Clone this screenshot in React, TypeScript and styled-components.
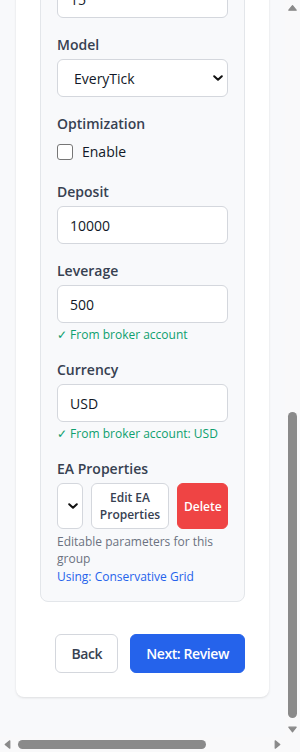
import React, { useLayoutEffect, useRef } from "react";
import styled, { createGlobalStyle } from "styled-components";

const Global = createGlobalStyle`
  html, body { margin: 0; padding: 0; height: 100%; overflow: hidden; }
  body {
    font-family: "Segoe UI", "Open Sans", "Noto Sans", sans-serif;
    background: #f8f9fb;
    color: #111827;
  }
  * { box-sizing: border-box; }
`;

/* ---------- window frame with classic scrollbars ---------- */

const Frame = styled.div`
  display: grid;
  grid-template-columns: 1fr 15px;
  grid-template-rows: 1fr 15px;
  width: 100vw;
  height: 100vh;
  background: #f8f9fb;
`;

const Viewport = styled.div`
  min-width: 0;
  min-height: 0;
  overflow: hidden;
  background: #f8f9fb;
`;

const ScrollBar = styled.div<{ $vertical?: boolean }>`
  display: flex;
  flex-direction: ${(p) => (p.$vertical ? "column" : "row")};
  background: #f9f9fa;
`;

const ScrollArrow = styled.div`
  flex: none;
  width: 15px;
  height: 15px;
  display: flex;
  align-items: center;
  justify-content: center;
`;

const ScrollTrack = styled.div<{ $vertical?: boolean }>`
  flex: 1;
  display: flex;
  flex-direction: ${(p) => (p.$vertical ? "column" : "row")};
  justify-content: ${(p) => (p.$vertical ? "flex-end" : "flex-start")};
  align-items: stretch;
  padding: ${(p) => (p.$vertical ? "0 3px 4px" : "3px 0 3px 3px")};
`;

const ScrollThumb = styled.div<{ $size: number; $vertical?: boolean }>`
  flex: none;
  ${(p) => (p.$vertical ? `height: ${p.$size}px;` : `width: ${p.$size}px;`)}
  background: #8a8a8a;
  border-radius: 5px;
`;

const Corner = styled.div`
  background: #f9f9fa;
`;

const Arrow = ({ dir }: { dir: "up" | "down" | "left" | "right" }) => {
  const pts = {
    up: "3.8,10.2 7.5,5.6 11.2,10.2",
    down: "3.8,5.2 7.5,9.8 11.2,5.2",
    left: "9.8,3.8 5.2,7.5 9.8,11.2",
    right: "5.2,3.8 9.8,7.5 5.2,11.2",
  }[dir];
  return (
    <svg width="15" height="15" viewBox="0 0 15 15">
      <polygon points={pts} fill="#8a8a8a" stroke="#8a8a8a" strokeWidth="1.2" strokeLinejoin="round" />
    </svg>
  );
};

/* ---------- page ---------- */

const Page = styled.div`
  padding: 16px 16px 40px;
`;

const TopBar = styled.header`
  display: flex;
  align-items: center;
  gap: 20px;
  height: 48px;
  margin-bottom: 24px;
  white-space: nowrap;
  font-size: 15px;
  font-weight: 700;
  color: #111827;
`;

const TopLink = styled.span`
  font-size: 13px;
  font-weight: 500;
  color: #6b7280;
`;

const Card = styled.section`
  background: #ffffff;
  border-radius: 8px;
  box-shadow: 0 1px 3px rgba(0, 0, 0, 0.08), 0 1px 2px rgba(0, 0, 0, 0.04);
  padding: 24px;
`;

const Title = styled.h2`
  margin: 0 0 4px;
  font-size: 20px;
  line-height: 28px;
  font-weight: 700;
  color: #111827;
`;

const Subtitle = styled.p`
  margin: 0 0 24px;
  font-size: 14px;
  line-height: 20px;
  color: #6b7280;
`;

const Panel = styled.div`
  background: #f8f9fb;
  border: 1px solid #e3e6ea;
  border-radius: 8px;
  padding: 16px;
`;

const PanelTitle = styled.h3`
  margin: 0 0 16px;
  font-size: 16px;
  line-height: 24px;
  font-weight: 600;
  color: #111827;
`;

const Field = styled.div<{ $last?: boolean }>`
  display: flex;
  flex-direction: column;
  margin-bottom: ${(p) => (p.$last ? "0" : "16px")};
`;

const Label = styled.label`
  display: block;
  font-size: 14px;
  line-height: 21px;
  font-weight: 600;
  color: #374151;
  margin-bottom: 4px;
`;

const TextInput = styled.input`
  display: block;
  width: 100%;
  height: 38px;
  padding: 0 12px;
  border: 1px solid #d4d7dd;
  border-radius: 6px;
  background: #ffffff;
  font-family: inherit;
  font-size: 14px;
  color: #111827;
  outline: none;
`;

const SelectWrap = styled.div<{ $grow?: boolean }>`
  position: relative;
  display: flex;
  ${(p) => (p.$grow ? "flex: 1 1 0; min-width: 0;" : "")}
`;

const Select = styled.select<{ $compact?: boolean }>`
  appearance: none;
  -webkit-appearance: none;
  width: 100%;
  height: ${(p) => (p.$compact ? "auto" : "38px")};
  padding: 0 ${(p) => (p.$compact ? "0" : "24px")} 0 ${(p) => (p.$compact ? "0" : "16px")};
  border: 1px solid #d4d7dd;
  border-radius: 6px;
  background: #ffffff;
  font-family: inherit;
  font-size: 14px;
  color: ${(p) => (p.$compact ? "transparent" : "#111827")};
  outline: none;
`;

const Chevron = styled.svg`
  position: absolute;
  right: 5px;
  top: 50%;
  width: 10px;
  height: 6px;
  margin-top: -3px;
  pointer-events: none;
`;

const CheckRow = styled.label`
  display: flex;
  align-items: center;
  gap: 9px;
  height: 27px;
  font-size: 14px;
  color: #111827;
`;

const Checkbox = styled.input`
  appearance: none;
  -webkit-appearance: none;
  width: 16px;
  height: 16px;
  margin: 0;
  border: 1px solid #767676;
  border-radius: 3px;
  background: #ffffff;
`;

const Hint = styled.div<{ $tone?: "ok" | "muted" | "link"; $gap?: number }>`
  margin-top: ${(p) => p.$gap ?? 4}px;
  font-size: 12px;
  line-height: ${(p) => (p.$tone === "muted" ? "17px" : "16px")};
  color: ${(p) =>
    p.$tone === "ok" ? "#0e9f6e" : p.$tone === "link" ? "#2563eb" : "#6b7280"};
`;

const PropsRow = styled.div`
  display: flex;
  align-items: stretch;
  gap: 8px;
  height: 46px;
`;

const SmallButton = styled.button<{ $danger?: boolean }>`
  flex: none;
  width: ${(p) => (p.$danger ? "51px" : "78px")};
  padding: 5px 6px;
  border: 1px solid ${(p) => (p.$danger ? "#ef4444" : "#d4d7dd")};
  border-radius: 6px;
  background: ${(p) => (p.$danger ? "#ef4444" : "#ffffff")};
  color: ${(p) => (p.$danger ? "#ffffff" : "#374151")};
  font-family: inherit;
  font-size: 12px;
  line-height: 17px;
  font-weight: 600;
  text-align: center;
`;

const Actions = styled.div`
  display: flex;
  justify-content: flex-end;
  gap: 12px;
  margin-top: 32px;
`;

const ActionButton = styled.button<{ $primary?: boolean }>`
  height: 39px;
  padding: 0 15px;
  border: 1px solid ${(p) => (p.$primary ? "#2563eb" : "#d4d7dd")};
  border-radius: 6px;
  background: ${(p) => (p.$primary ? "#2563eb" : "#ffffff")};
  color: ${(p) => (p.$primary ? "#ffffff" : "#374151")};
  font-family: inherit;
  font-size: 14px;
  font-weight: 600;
  letter-spacing: -0.4px;
`;

const ChevronIcon = () => (
  <Chevron viewBox="0 0 10 6">
    <path d="M1.2 1.2 L5 4.8 L8.8 1.2" fill="none" stroke="#111" strokeWidth="2" strokeLinecap="round" strokeLinejoin="round" />
  </Chevron>
);

const upperFields: { label: string; value: string; select?: boolean }[] = [
  { label: "Group Name", value: "Conservative Grid" },
  { label: "Expert", value: "GridMaster_v2.ex5" },
  { label: "Symbol", value: "EURUSD" },
  { label: "Timeframe", value: "M15", select: true },
  { label: "From", value: "2024-01-01" },
  { label: "To", value: "2024-06-30" },
  { label: "Forward", value: "No", select: true },
  { label: "Delays", value: "Zero latency", select: true },
  { label: "Spread", value: "15" },
];

export default function App() {
  const ref = useRef<HTMLDivElement>(null);
  useLayoutEffect(() => {
    const el = ref.current;
    if (el) {
      el.scrollTop = el.scrollHeight;
      el.scrollLeft = 0;
    }
  }, []);

  return (
    <>
      <Global />
      <Frame>
        <Viewport ref={ref}>
          <Page>
            <TopBar>
              MT5 Backtester
              <TopLink>Dashboard</TopLink>
              <TopLink>Backtests</TopLink>
              <TopLink>Settings</TopLink>
            </TopBar>
            <Card>
              <Title>New Backtest</Title>
              <Subtitle>Step 2 of 3: Configure test groups</Subtitle>
              <Panel>
                <PanelTitle>Group 1</PanelTitle>
                {upperFields.map((f) => (
                  <Field key={f.label}>
                    <Label>{f.label}</Label>
                    {f.select ? (
                      <SelectWrap>
                        <Select defaultValue={f.value}>
                          <option>{f.value}</option>
                        </Select>
                        <ChevronIcon />
                      </SelectWrap>
                    ) : (
                      <TextInput defaultValue={f.value} />
                    )}
                  </Field>
                ))}

                <Field>
                  <Label>Model</Label>
                  <SelectWrap>
                    <Select defaultValue="EveryTick">
                      <option>EveryTick</option>
                      <option>OHLC</option>
                      <option>OpenPrices</option>
                    </Select>
                    <ChevronIcon />
                  </SelectWrap>
                </Field>

                <Field>
                  <Label>Optimization</Label>
                  <CheckRow>
                    <Checkbox type="checkbox" />
                    Enable
                  </CheckRow>
                </Field>

                <Field>
                  <Label>Deposit</Label>
                  <TextInput defaultValue="10000" />
                </Field>

                <Field>
                  <Label>Leverage</Label>
                  <TextInput defaultValue="500" />
                  <Hint $tone="ok">✓ From broker account</Hint>
                </Field>

                <Field>
                  <Label>Currency</Label>
                  <TextInput defaultValue="USD" />
                  <Hint $tone="ok">✓ From broker account: USD</Hint>
                </Field>

                <Field $last>
                  <Label>EA Properties</Label>
                  <PropsRow>
                    <SelectWrap $grow>
                      <Select $compact defaultValue="Conservative Grid">
                        <option>Conservative Grid</option>
                      </Select>
                      <ChevronIcon />
                    </SelectWrap>
                    <SmallButton>Edit EA Properties</SmallButton>
                    <SmallButton $danger>Delete</SmallButton>
                  </PropsRow>
                  <Hint $tone="muted">Editable parameters for this group</Hint>
                  <Hint $tone="link" $gap={2}>Using: Conservative Grid</Hint>
                </Field>
              </Panel>

              <Actions>
                <ActionButton>Back</ActionButton>
                <ActionButton $primary>Next: Review</ActionButton>
              </Actions>
            </Card>
          </Page>
        </Viewport>

        <ScrollBar $vertical>
          <ScrollArrow><Arrow dir="up" /></ScrollArrow>
          <ScrollTrack $vertical>
            <ScrollThumb $vertical $size={306} />
          </ScrollTrack>
          <ScrollArrow><Arrow dir="down" /></ScrollArrow>
        </ScrollBar>

        <ScrollBar>
          <ScrollArrow><Arrow dir="left" /></ScrollArrow>
          <ScrollTrack>
            <ScrollThumb $size={188} />
          </ScrollTrack>
          <ScrollArrow><Arrow dir="right" /></ScrollArrow>
        </ScrollBar>

        <Corner />
      </Frame>
    </>
  );
}
